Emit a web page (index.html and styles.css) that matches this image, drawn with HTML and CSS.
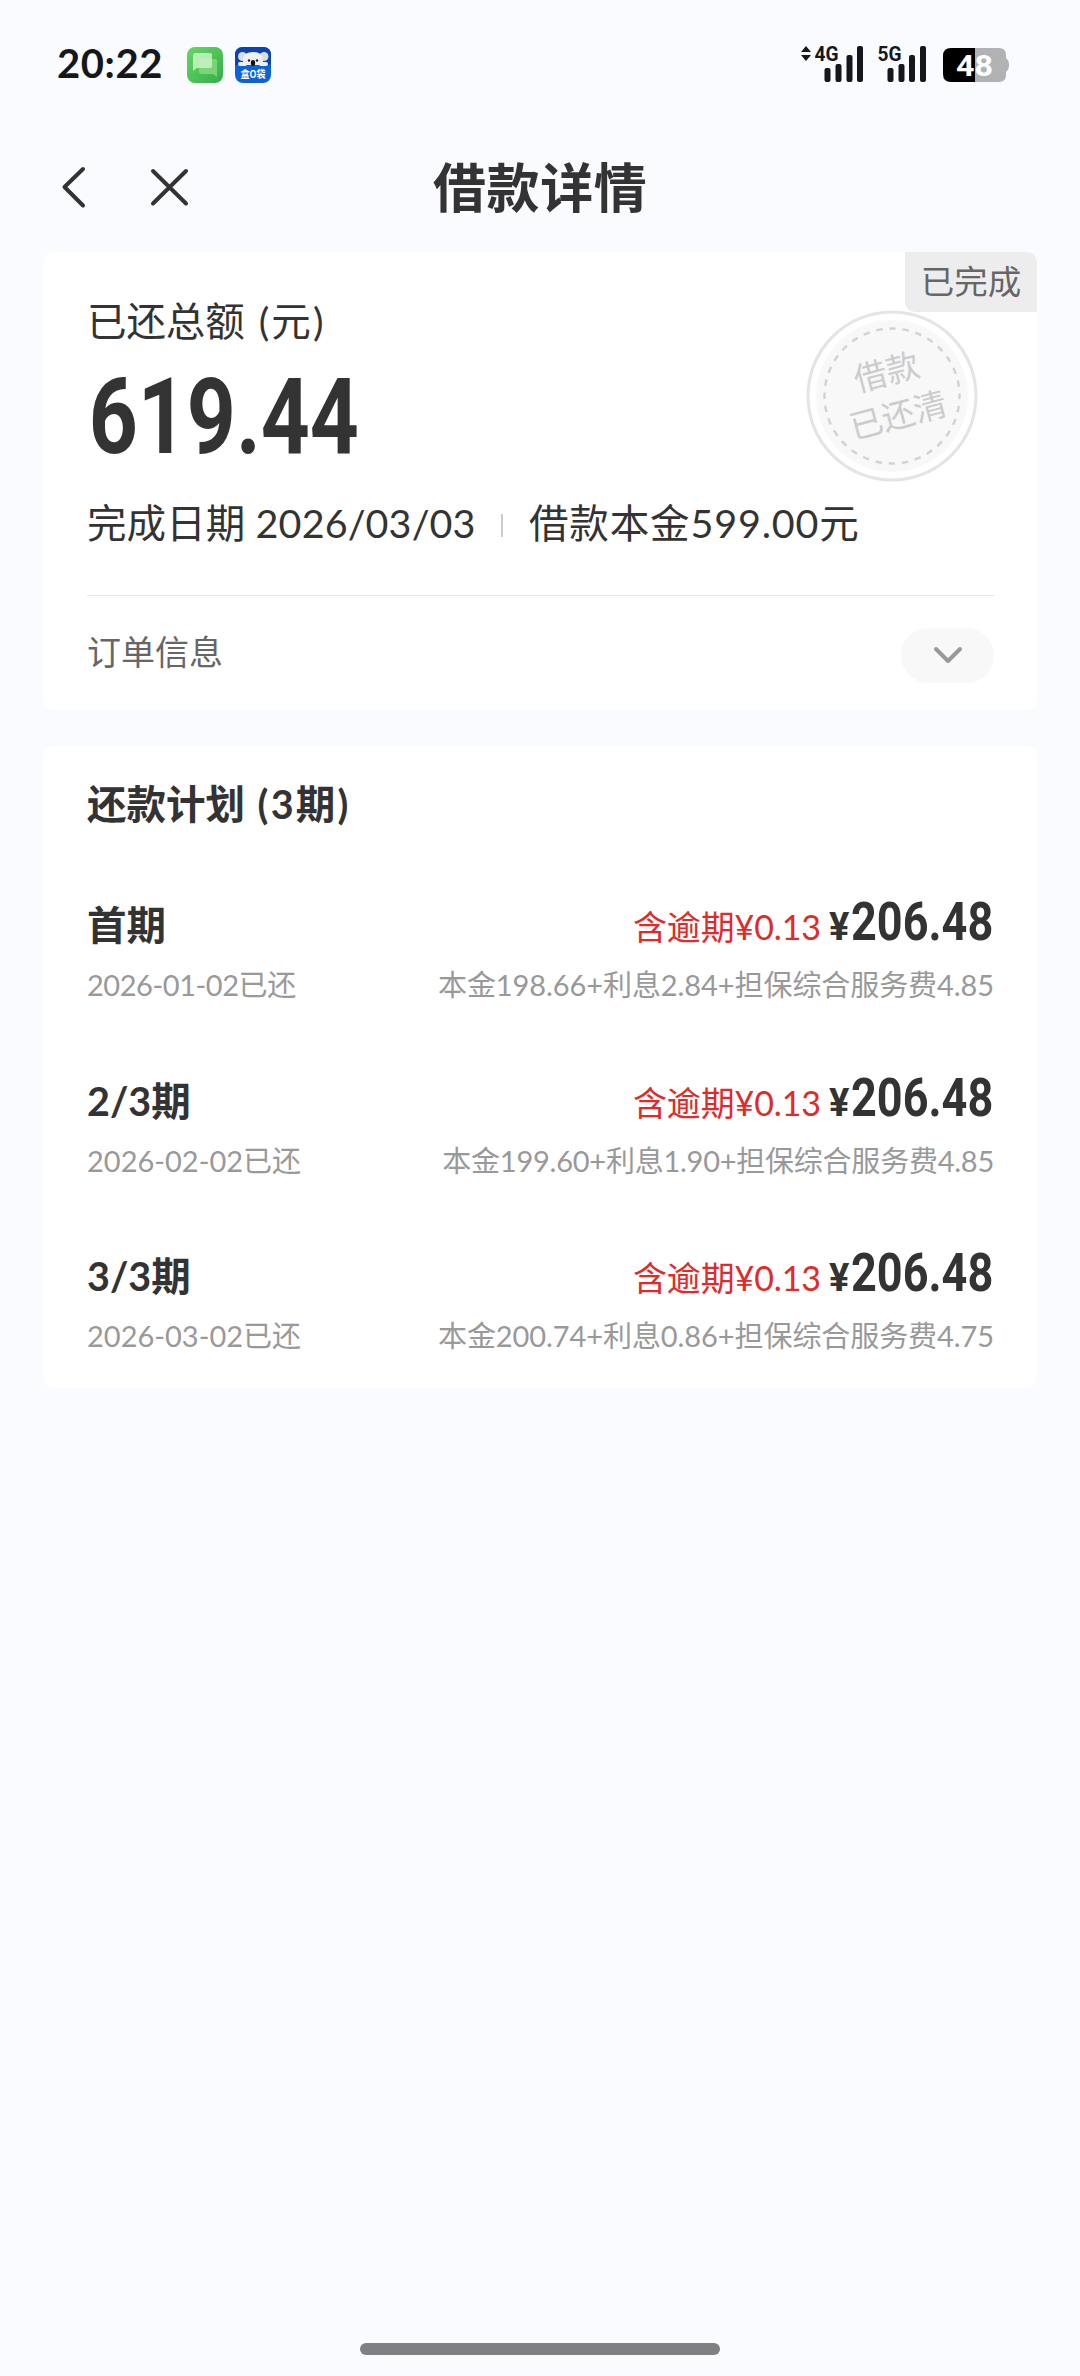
FILE: index.html
```html
<!DOCTYPE html>
<html lang="zh-CN">
<head>
<meta charset="utf-8">
<title>借款详情</title>
<link rel="stylesheet" href="styles.css">
</head>
<body>
<div class="screen">
  <header class="status">
    <span class="clock">20:22</span>
    <svg class="app-icon" width="36" height="36" viewBox="0 0 36 36">
      <defs><linearGradient id="green" x1="0" y1="0" x2="1" y2="1"><stop offset="0" stop-color="#67d765"/><stop offset="1" stop-color="#35ae49"/></linearGradient></defs>
      <rect width="36" height="36" rx="8" fill="url(#green)"/>
      <path d="M14 12h14q2 0 2 2v16l-4-3H14q-2 0-2-2V14q0-2 2-2z" fill="#8bdc83" opacity=".75"/>
      <path d="M8 6h15q2 0 2 2v11q0 2-2 2H10l-4 3V8q0-2 2-2z" fill="#c9f3c4" opacity=".85"/>
    </svg>
    <svg class="app-icon" width="36" height="36" viewBox="0 0 36 36">
      <rect width="36" height="36" rx="8" fill="#0c63d8"/>
      <path d="M0 18V8q0-8 8-8h20q8 0 8 8v10z" fill="#0a43b4"/>
      <circle cx="7.500" cy="9.500" r="4.500" fill="#dcdcdc"/><circle cx="29" cy="9.500" r="4.500" fill="#dcdcdc"/>
      <path d="M8 18V12q1-7 10-7t10 7v6z" fill="#f0f0f0"/>
      <rect x="3" y="15" width="9" height="4" rx="2" fill="#eee"/><rect x="24" y="15" width="9" height="4" rx="2" fill="#eee"/>
      <circle cx="14" cy="13.500" r="1.200" fill="#222"/><circle cx="22" cy="13.500" r="1.200" fill="#222"/>
      <ellipse cx="18" cy="16" rx="2.200" ry="3" fill="#111"/>
      <text x="18" y="31" text-anchor="middle" class="app-label" textLength="25" lengthAdjust="spacingAndGlyphs">盒O袋</text>
    </svg>
    <svg class="signals" width="210" height="54" viewBox="800 34 210 54">
      <path d="M801 52l5-6 5 6zM801 55h10l-5 6z" fill="#15171b"/>
      <text x="814.500" y="61" class="net" textLength="24" lengthAdjust="spacingAndGlyphs">4G</text>
      <text x="877.500" y="61" class="net" textLength="24" lengthAdjust="spacingAndGlyphs">5G</text>
      <g fill="#15171b">
        <rect x="824.500" y="68" width="6" height="14" rx="2"/><rect x="835.500" y="64" width="6" height="18" rx="2"/><rect x="846.500" y="55" width="6" height="27" rx="2"/><rect x="857" y="46" width="6" height="36" rx="2"/>
        <rect x="887.500" y="68" width="6" height="14" rx="2"/><rect x="898.500" y="64" width="6" height="18" rx="2"/><rect x="909" y="55" width="6" height="27" rx="2"/><rect x="920" y="46" width="6" height="36" rx="2"/>
      </g>
      <path d="M975 48h24q7 0 7 7v3q3 2 3 7t-3 7v3q0 7-7 7h-24z" fill="#b1b2b4"/>
      <path d="M975 48h-24q-8 0-8 8v18q0 8 8 8h24z" fill="#000"/>
      <text x="956" y="75.500" class="battery" textLength="37" lengthAdjust="spacingAndGlyphs">48</text>
    </svg>
  </header>

  <nav class="nav">
    <svg class="nav-icons" width="140" height="50" viewBox="55 162 140 50" fill="none" stroke="#333" stroke-width="4" stroke-linecap="round" stroke-linejoin="round">
      <path d="M83 169L64.500 187L83 205.500"/>
      <path d="M153 171L186 203.500M186 171L153 203.500"/>
    </svg>
    <h1 class="title">借款详情</h1>
  </nav>

  <section class="card summary">
    <div class="label">已还总额 <span class="unit">(元)</span></div>
    <div class="total">619.44</div>
    <div class="facts"><span class="done">完成日期 2026/03/03</span><i class="bar"></i><span class="principal">借款本金599.00元</span></div>
    <div class="order">
      <span>订单信息</span>
      <span class="pill"><svg width="32" height="20" viewBox="0 0 32 20"><path d="M4 3l12 12L28 3" fill="none" stroke="#999" stroke-width="4" stroke-linecap="round" stroke-linejoin="round"/></svg></span>
    </div>
    <svg class="stamp" width="176" height="176" viewBox="-88 -88 176 176">
      <circle r="76" fill="#f8f8f8"/>
      <circle r="84" fill="none" stroke="#e4e4e4" stroke-width="3"/>
      <circle r="67.500" fill="none" stroke="#d2d2d2" stroke-width="2.400" stroke-dasharray="6.500 6.754" stroke-dashoffset="3.250"/>
      <g transform="rotate(-15)" class="stamp-text"><text x="1" y="-12.500">借款</text><text x="1" y="32">已还清</text></g>
    </svg>
    <div class="tag">已完成</div>
  </section>

  <section class="card plan">
    <h2 class="plan-title">还款计划 <span class="unit">(3期)</span></h2>
    <div class="item">
      <div class="line"><b class="term">首期</b><span class="late">含逾期¥0.13</span><span class="yen">¥</span><b class="amount">206.48</b></div>
      <div class="line small"><span class="date narrow">2026-01-02已还</span><span class="detail">本金198.66+利息2.84+担保综合服务费4.85</span></div>
    </div>
    <div class="item">
      <div class="line"><b class="term">2/3期</b><span class="late">含逾期¥0.13</span><span class="yen">¥</span><b class="amount">206.48</b></div>
      <div class="line small"><span class="date">2026-02-02已还</span><span class="detail tight">本金199.60+利息1.90+担保综合服务费4.85</span></div>
    </div>
    <div class="item">
      <div class="line"><b class="term">3/3期</b><span class="late">含逾期¥0.13</span><span class="yen">¥</span><b class="amount">206.48</b></div>
      <div class="line small"><span class="date">2026-03-02已还</span><span class="detail">本金200.74+利息0.86+担保综合服务费4.75</span></div>
    </div>
  </section>
  <div class="home"></div>
</div>
</body>
</html>
```
FILE: styles.css
```css
* { box-sizing: border-box; }
body {
  margin: 0;
  background: #fafbff;
  color: #333;
  font-family: Lato, "Noto Sans CJK SC", sans-serif;
}
.screen { width: 1080px; height: 2376px; display: flex; flex-direction: column; }
.status { height: 130px; padding: 34px 70px 0 57px; display: flex; align-items: flex-start; flex: none; }
.clock { width: 130px; padding-top: 9px; font-size: 40px; line-height: 40px; font-weight: 700; letter-spacing: 0.6px; color: #15171b; white-space: nowrap; }
.app-icon { margin: 13px 12px 0 0; flex: none; }
.signals { margin-left: auto; flex: none; }
.app-label { font: 700 10px "Noto Sans CJK SC", sans-serif; fill: #fff; }
.net { font: 700 21px Roboto, sans-serif; fill: #15171b; }
.battery { font: 700 29px Roboto, sans-serif; fill: #fff; }

.nav { height: 122px; padding: 32px 55px 0; display: flex; flex: none; align-items: flex-start; }
.title { margin: -12px 0 0 238px; font-size: 53px; line-height: 76px; font-weight: 700; letter-spacing: 0.6px; white-space: nowrap; }

.card { margin: 0 43px 36px 43px; background: #fff; border-radius: 10px; flex: none; }
.summary { height: 458px; padding: 0 43px 0 44px; position: relative; }
.label { padding-top: 39px; font-size: 39.5px; line-height: 60px; height: 101px; letter-spacing: -0.1px; word-spacing: 4px; white-space: nowrap; }
.unit { letter-spacing: 2.2px; }
.total {
  height: 130px;
  padding-left: 2px;
  font: 700 105px/130px Roboto, sans-serif;
  transform: scaleX(0.815);
  transform-origin: 0 50%;
  white-space: nowrap;
}
.facts { height: 112px; display: flex; align-items: flex-start; font-size: 39.5px; line-height: 80px; white-space: nowrap; }
.done { width: 414px; letter-spacing: 0.1px; }
.principal { letter-spacing: 0.85px; }
.bar { width: 2px; height: 23px; margin: 31px 26px 0 0; background: #ccc; }
.order { height: 115px; border-top: 1px solid #e8e8e8; display: flex; justify-content: space-between; align-items: flex-start; padding-top: 32px; font-size: 34px; line-height: 48px; color: #666; }
.pill { width: 93px; height: 55px; border-radius: 27px; background: #f8f8f8; display: flex; align-items: center; justify-content: center; }
.stamp { position: absolute; left: 761px; top: 56px; }
.stamp-text text { font: 400 33px "Noto Sans CJK SC", sans-serif; fill: #ccc; text-anchor: middle; }
.tag { position: absolute; right: 0; top: 0; width: 132px; height: 60px; border-radius: 0 10px 0 10px; background: #ededed; color: #666; font-size: 33.5px; line-height: 58px; text-align: center; }

.plan { height: 642px; padding: 28px 43px 0 44px; }
.plan-title { margin: 0; height: 115px; font-size: 39.5px; line-height: 60px; font-weight: 700; word-spacing: 3px; white-space: nowrap; }
.item { height: 175.5px; }
.line { height: 72px; display: flex; align-items: baseline; line-height: 72px; white-space: nowrap; }
.term { margin-right: auto; font-size: 39.5px; }
.late { font-size: 34px; letter-spacing: -0.1px; color: #e02b2b; margin-right: 8px; }
.yen { font: 700 38px Roboto, sans-serif; width: 22px; }
.amount { width: 143px; font: 700 53px Roboto, sans-serif; transform: scaleX(0.85); transform-origin: 0 50%; }
.small { height: 48px; line-height: 48px; font-size: 29px; color: #999; justify-content: space-between; }
.narrow { letter-spacing: -0.45px; }
.detail { letter-spacing: -0.08px; }
.tight { letter-spacing: -0.24px; }

.home { width: 360px; height: 12px; border-radius: 6px; background: #7f8081; margin: auto auto 21px; flex: none; }
```
